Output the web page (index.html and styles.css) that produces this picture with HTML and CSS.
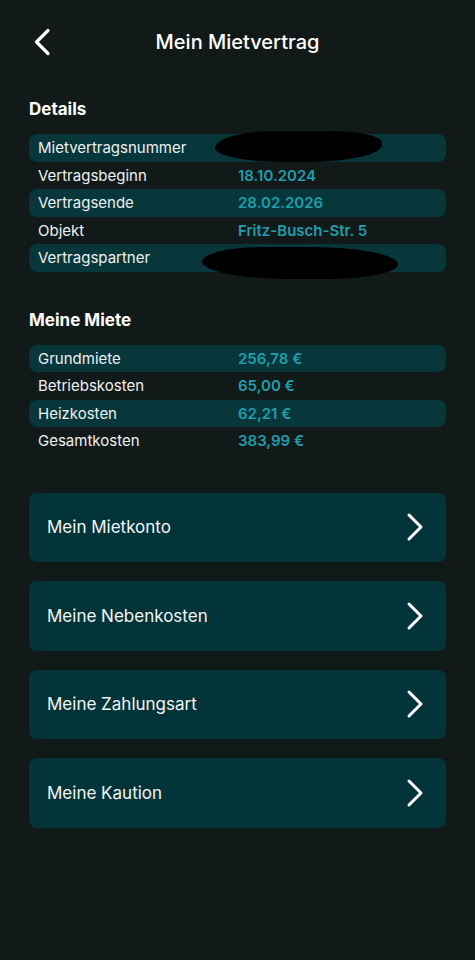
FILE: index.html
```html
<!DOCTYPE html>
<html lang="de">
<head>
    <meta charset="UTF-8">
    <meta name="viewport" content="width=device-width, initial-scale=1.0">
    <title>Mein Mietvertrag</title>
    <link rel="stylesheet" href="styles.css">
</head>
<body>
    <header class="topbar">
        <a class="back" href="#">
            <svg width="18" height="28" viewBox="0 0 18 28"><path d="M15 2.5 L3.5 14 L15 25.5" fill="none" stroke="#fff" stroke-width="3.2" stroke-linecap="round" stroke-linejoin="round"/></svg>
        </a>
        <h1>Mein Mietvertrag</h1>
        <span></span>
    </header>

    <h2 class="section-title">Details</h2>
    <div class="table">
        <div class="row"><span class="label">Mietvertragsnummer</span><span class="value"></span><span class="redact redact-1"></span></div>
        <div class="row"><span class="label">Vertragsbeginn</span><span class="value">18.10.2024</span></div>
        <div class="row"><span class="label">Vertragsende</span><span class="value">28.02.2026</span></div>
        <div class="row"><span class="label">Objekt</span><span class="value">Fritz-Busch-Str. 5</span></div>
        <div class="row"><span class="label">Vertragspartner</span><span class="value"></span><span class="redact redact-2"></span></div>
    </div>

    <h2 class="section-title second">Meine Miete</h2>
    <div class="table">
        <div class="row"><span class="label">Grundmiete</span><span class="value">256,78 €</span></div>
        <div class="row"><span class="label">Betriebskosten</span><span class="value">65,00 €</span></div>
        <div class="row"><span class="label">Heizkosten</span><span class="value">62,21 €</span></div>
        <div class="row"><span class="label">Gesamtkosten</span><span class="value">383,99 €</span></div>
    </div>

    <nav class="links">
        <a class="link" href="#">Mein Mietkonto<svg width="18" height="30" viewBox="0 0 18 30"><path d="M3 3 L15 15 L3 27" fill="none" stroke="#fff" stroke-width="3" stroke-linecap="round" stroke-linejoin="round"/></svg></a>
        <a class="link" href="#">Meine Nebenkosten<svg width="18" height="30" viewBox="0 0 18 30"><path d="M3 3 L15 15 L3 27" fill="none" stroke="#fff" stroke-width="3" stroke-linecap="round" stroke-linejoin="round"/></svg></a>
        <a class="link" href="#">Meine Zahlungsart<svg width="18" height="30" viewBox="0 0 18 30"><path d="M3 3 L15 15 L3 27" fill="none" stroke="#fff" stroke-width="3" stroke-linecap="round" stroke-linejoin="round"/></svg></a>
        <a class="link" href="#">Meine Kaution<svg width="18" height="30" viewBox="0 0 18 30"><path d="M3 3 L15 15 L3 27" fill="none" stroke="#fff" stroke-width="3" stroke-linecap="round" stroke-linejoin="round"/></svg></a>
    </nav>
</body>
</html>
```

FILE: styles.css
```css
body {
    font-family: Inter, "Noto Sans", Arial, sans-serif;
    background-color: #121a19;
    color: #f2f4f4;
    margin: 0;
    padding: 0 29px;
}
.topbar {
    height: 84px;
    display: grid;
    grid-template-columns: 40px 1fr 40px;
    align-items: center;
}
.back {
    display: flex;
    padding-left: 4px;
    padding-top: 0;
}
.topbar h1 {
    margin: 0;
    text-align: center;
    font-size: 20px;
    font-weight: 500;
    color: #fff;
}
.section-title {
    margin: 14px 0 14px;
    height: 22px;
    line-height: 22px;
    font-size: 17px;
    font-weight: 700;
    color: #fff;
}
.section-title.second {
    margin-top: 37px;
}
.row {
    position: relative;
    height: 27.5px;
    display: grid;
    grid-template-columns: 200px 1fr;
    align-items: center;
    padding-left: 9px;
    border-radius: 8px;
    font-size: 15px;
}
.row:nth-child(odd) {
    background-color: #07363b;
}
.label {
    color: #eef1f1;
}
.value {
    color: #1f9eab;
    font-weight: 600;
}
.redact {
    position: absolute;
    background: #000;
}
.redact-1 {
    left: 186px;
    top: -3px;
    width: 167px;
    height: 31px;
    border-radius: 40% 35% 50% 45% / 60% 40% 60% 50%;
}
.redact-2 {
    left: 173px;
    top: 3px;
    width: 196px;
    height: 32px;
    border-radius: 35% 50% 40% 50% / 50% 60% 50% 60%;
}
.links {
    margin-top: 38px;
    display: flex;
    flex-direction: column;
    gap: 19px;
}
.link {
    height: 69.5px;
    display: flex;
    align-items: center;
    justify-content: space-between;
    padding: 0 22px 0 18px;
    background-color: #03343a;
    border-radius: 8px;
    color: #f2f4f4;
    text-decoration: none;
    font-size: 17px;
}
```
